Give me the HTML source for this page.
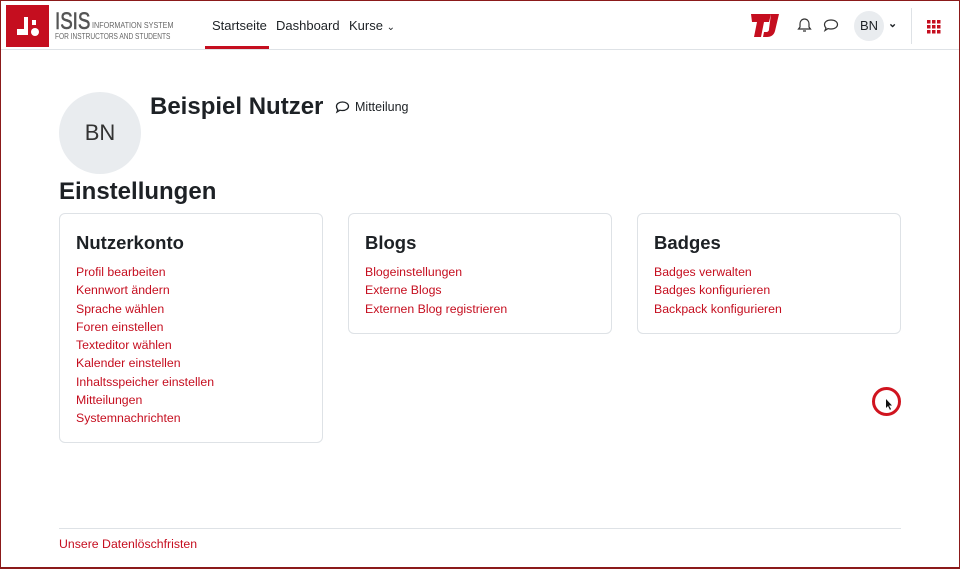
<!DOCTYPE html>
<html><head><meta charset="utf-8"><style>
*{box-sizing:border-box;margin:0;padding:0}
html,body{width:960px;height:569px;overflow:hidden;background:#fff;font-family:"Liberation Sans",sans-serif;color:#1d2125}
.frame{position:absolute;inset:0;border:1px solid #8b1a1a;border-bottom:2px solid #8b1a1a;pointer-events:none;z-index:9}
.nav{position:absolute;left:0;top:0;width:960px;height:50px;border-bottom:1px solid #dee2e6;background:#fff}
.logo{position:absolute;left:6px;top:5px;width:43px;height:42px;background:#c50e1f}
.isis{position:absolute;left:55px;top:8px;font-size:24px;color:#555;transform:scaleX(0.78);transform-origin:left;-webkit-text-stroke:0.6px #555}
.s1{position:absolute;left:92px;top:21px;font-size:8px;color:#666;transform:scaleX(0.9);transform-origin:left}
.s2{position:absolute;left:55px;top:32px;font-size:8px;color:#666;transform:scaleX(0.82);transform-origin:left}
.nl{position:absolute;top:18px;font-size:13px;color:#1d2125}
.act{position:absolute;left:205px;top:46px;width:64px;height:3px;background:#c50e1f}
a{color:#c50e1f;text-decoration:none}
.card{position:absolute;top:213px;width:264px;border:1px solid #dee2e6;border-radius:6px;padding:18px 16px}
.card h3{font-size:18.5px;font-weight:bold;margin-bottom:9px}
.card a{display:block;font-size:12.3px;line-height:18.3px}
</style></head><body>
<div class="frame"></div>
<div class="nav">
 <div class="logo"><svg width="43" height="42"><g fill="#fff"><rect x="18" y="12" width="4" height="18"/><rect x="11" y="24" width="9" height="6"/><rect x="26" y="15" width="4" height="5"/><circle cx="29" cy="27" r="4"/></g></svg></div>
 <div class="isis">ISIS</div>
 <div class="s1">INFORMATION SYSTEM</div>
 <div class="s2">FOR INSTRUCTORS AND STUDENTS</div>
 <div class="nl" style="left:212px">Startseite</div>
 <div class="nl" style="left:276px">Dashboard</div>
 <div class="nl" style="left:349px">Kurse <span style="font-size:10px">&#8964;</span></div>
 <div class="act"></div>
 <svg style="position:absolute;left:749px;top:13px" width="34" height="25"><path d="M2 1h20l-2 8h-5l-3 15h-7l3-15h-5z M22 1h8l-4 17c-1 4-4 6-8 6h-4l1-5h2c2 0 3-1 3-3z" fill="#c50e1f"/></svg>
 <svg style="position:absolute;left:797px;top:17px" width="15" height="16"><path d="M7.5 2c-3 0-4.5 2.5-4.5 5v3l-1.5 2h12L12 10V7c0-2.5-1.5-5-4.5-5zM6 14h3" fill="none" stroke="#333" stroke-width="1.2"/></svg>
 <svg style="position:absolute;left:823px;top:18px" width="16" height="15"><path d="M8 2c4 0 6.5 2 6.5 4.5S12 11 8 11c-1 0-2 0-3-.4L2 12.5l1-2.5C2 9 1.5 8 1.5 6.5 1.5 4 4 2 8 2z" fill="none" stroke="#333" stroke-width="1.2"/></svg>
 <div style="position:absolute;left:854px;top:11px;width:30px;height:30px;border-radius:50%;background:#e9ecef;font-size:13px;text-align:center;line-height:30px">BN</div>
 <div style="position:absolute;left:888px;top:17px;font-size:11px;font-weight:bold">&#8964;</div>
 <div style="position:absolute;left:911px;top:8px;width:1px;height:36px;background:#dee2e6"></div>
 <svg style="position:absolute;left:927px;top:20px" width="14" height="14"><g fill="#c50e1f"><rect x="0" y="0" width="3.5" height="3.5"/><rect x="5" y="0" width="3.5" height="3.5"/><rect x="10" y="0" width="3.5" height="3.5"/><rect x="0" y="5" width="3.5" height="3.5"/><rect x="5" y="5" width="3.5" height="3.5"/><rect x="10" y="5" width="3.5" height="3.5"/><rect x="0" y="10" width="3.5" height="3.5"/><rect x="5" y="10" width="3.5" height="3.5"/><rect x="10" y="10" width="3.5" height="3.5"/></g></svg>
</div>
<div style="position:absolute;left:59px;top:92px;width:82px;height:82px;border-radius:50%;background:#e9ecef;font-size:22px;text-align:center;line-height:82px;color:#333">BN</div>
<div style="position:absolute;left:150px;top:93px;font-size:24px;font-weight:bold">Beispiel Nutzer</div>
<svg style="position:absolute;left:335px;top:101px" width="15" height="13"><path d="M7.5 1c3.5 0 6 2 6 4.3S11 9.5 7.5 9.5c-1 0-1.8 0-2.6-.3L2 11l.8-2.3C1.8 7.8 1.5 6.8 1.5 5.3 1.5 3 4 1 7.5 1z" fill="none" stroke="#1d2125" stroke-width="1.3"/></svg>
<div style="position:absolute;left:355px;top:100px;font-size:12.5px">Mitteilung</div>
<div style="position:absolute;left:59px;top:178px;font-size:24px;font-weight:bold">Einstellungen</div>
<div class="card" style="left:59px;height:230px"><h3>Nutzerkonto</h3><a>Profil bearbeiten</a><a>Kennwort ändern</a><a>Sprache wählen</a><a>Foren einstellen</a><a>Texteditor wählen</a><a>Kalender einstellen</a><a>Inhaltsspeicher einstellen</a><a>Mitteilungen</a><a>Systemnachrichten</a></div>
<div class="card" style="left:348px;height:121px"><h3>Blogs</h3><a>Blogeinstellungen</a><a>Externe Blogs</a><a>Externen Blog registrieren</a></div>
<div class="card" style="left:637px;height:121px"><h3>Badges</h3><a>Badges verwalten</a><a>Badges konfigurieren</a><a>Backpack konfigurieren</a></div>
<div style="position:absolute;left:872px;top:387px;width:29px;height:29px;border-radius:50%;border:3.5px solid #d0141f"></div>
<svg style="position:absolute;left:886px;top:399px" width="8" height="11"><path d="M0 0v9l2-2 2 4 1-1-2-3.5h3z" fill="#111"/></svg>
<div style="position:absolute;left:59px;top:528px;width:842px;height:1px;background:#dee2e6"></div>
<a style="position:absolute;left:59px;top:537px;font-size:12.3px">Unsere Datenlöschfristen</a>
</body></html>
